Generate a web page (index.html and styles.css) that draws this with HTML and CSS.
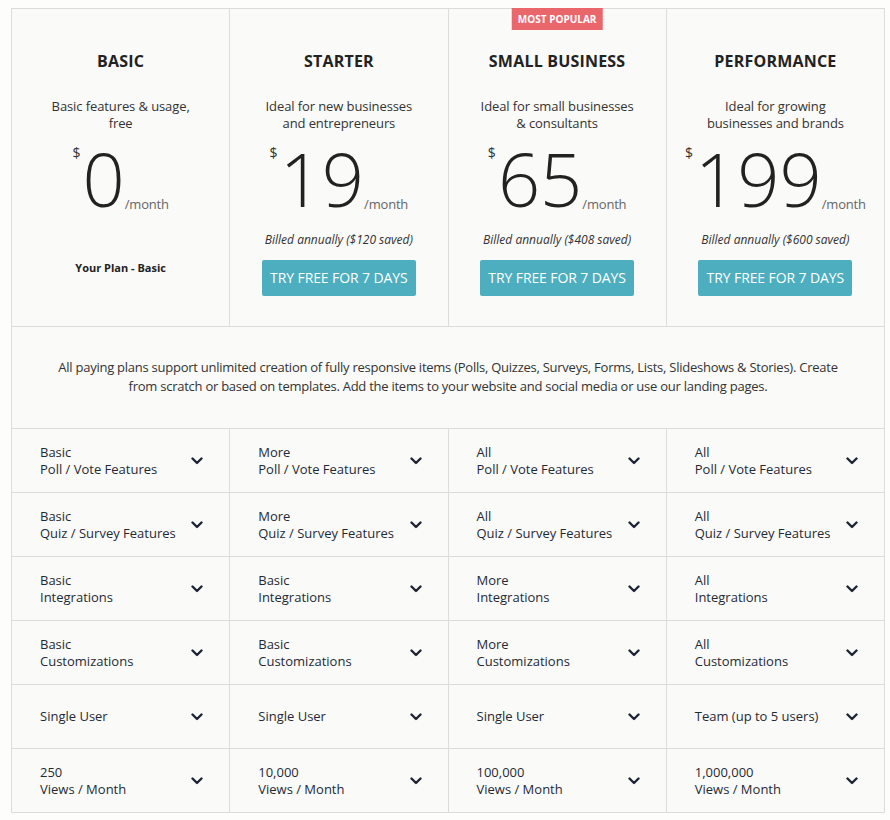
FILE: index.html
```html
<!DOCTYPE html>
<html lang="en">
<head>
<meta charset="utf-8">
<title>Pricing</title>
<link rel="stylesheet" href="styles.css">
</head>
<body>
<div class="pricing">
  <div class="plan">
    <h2 class="plan-title">BASIC</h2>
    <p class="plan-desc">Basic features &amp; usage,<br>free</p>
    <div class="price"><span class="cur">$</span><span class="amt">0</span><span class="per">/month</span></div>
    <div class="current">Your Plan - Basic</div>
  </div>
  <div class="plan">
    <h2 class="plan-title">STARTER</h2>
    <p class="plan-desc">Ideal for new businesses<br>and entrepreneurs</p>
    <div class="price"><span class="cur">$</span><span class="amt">19</span><span class="per">/month</span></div>
    <div class="billed">Billed annually ($120 saved)</div>
    <a class="btn">TRY FREE FOR 7 DAYS</a>
  </div>
  <div class="plan popular">
    <span class="badge">MOST POPULAR</span>
    <h2 class="plan-title">SMALL BUSINESS</h2>
    <p class="plan-desc">Ideal for small businesses<br>&amp; consultants</p>
    <div class="price"><span class="cur">$</span><span class="amt">65</span><span class="per">/month</span></div>
    <div class="billed">Billed annually ($408 saved)</div>
    <a class="btn">TRY FREE FOR 7 DAYS</a>
  </div>
  <div class="plan">
    <h2 class="plan-title">PERFORMANCE</h2>
    <p class="plan-desc">Ideal for growing<br>businesses and brands</p>
    <div class="price"><span class="cur">$</span><span class="amt">199</span><span class="per">/month</span></div>
    <div class="billed">Billed annually ($600 saved)</div>
    <a class="btn">TRY FREE FOR 7 DAYS</a>
  </div>

  <div class="note">All paying plans support unlimited creation of fully responsive items (Polls, Quizzes, Surveys, Forms, Lists, Slideshows &amp; Stories). Create from scratch or based on templates. Add the items to your website and social media or use our landing pages.</div>

  <div class="feat"><span>Basic<br>Poll / Vote Features</span><svg class="chev" viewBox="0 0 12 8"><path d="M1.5 1.5 6 6l4.5-4.5"/></svg></div>
  <div class="feat"><span>More<br>Poll / Vote Features</span><svg class="chev" viewBox="0 0 12 8"><path d="M1.5 1.5 6 6l4.5-4.5"/></svg></div>
  <div class="feat"><span>All<br>Poll / Vote Features</span><svg class="chev" viewBox="0 0 12 8"><path d="M1.5 1.5 6 6l4.5-4.5"/></svg></div>
  <div class="feat"><span>All<br>Poll / Vote Features</span><svg class="chev" viewBox="0 0 12 8"><path d="M1.5 1.5 6 6l4.5-4.5"/></svg></div>

  <div class="feat"><span>Basic<br>Quiz / Survey Features</span><svg class="chev" viewBox="0 0 12 8"><path d="M1.5 1.5 6 6l4.5-4.5"/></svg></div>
  <div class="feat"><span>More<br>Quiz / Survey Features</span><svg class="chev" viewBox="0 0 12 8"><path d="M1.5 1.5 6 6l4.5-4.5"/></svg></div>
  <div class="feat"><span>All<br>Quiz / Survey Features</span><svg class="chev" viewBox="0 0 12 8"><path d="M1.5 1.5 6 6l4.5-4.5"/></svg></div>
  <div class="feat"><span>All<br>Quiz / Survey Features</span><svg class="chev" viewBox="0 0 12 8"><path d="M1.5 1.5 6 6l4.5-4.5"/></svg></div>

  <div class="feat"><span>Basic<br>Integrations</span><svg class="chev" viewBox="0 0 12 8"><path d="M1.5 1.5 6 6l4.5-4.5"/></svg></div>
  <div class="feat"><span>Basic<br>Integrations</span><svg class="chev" viewBox="0 0 12 8"><path d="M1.5 1.5 6 6l4.5-4.5"/></svg></div>
  <div class="feat"><span>More<br>Integrations</span><svg class="chev" viewBox="0 0 12 8"><path d="M1.5 1.5 6 6l4.5-4.5"/></svg></div>
  <div class="feat"><span>All<br>Integrations</span><svg class="chev" viewBox="0 0 12 8"><path d="M1.5 1.5 6 6l4.5-4.5"/></svg></div>

  <div class="feat"><span>Basic<br>Customizations</span><svg class="chev" viewBox="0 0 12 8"><path d="M1.5 1.5 6 6l4.5-4.5"/></svg></div>
  <div class="feat"><span>Basic<br>Customizations</span><svg class="chev" viewBox="0 0 12 8"><path d="M1.5 1.5 6 6l4.5-4.5"/></svg></div>
  <div class="feat"><span>More<br>Customizations</span><svg class="chev" viewBox="0 0 12 8"><path d="M1.5 1.5 6 6l4.5-4.5"/></svg></div>
  <div class="feat"><span>All<br>Customizations</span><svg class="chev" viewBox="0 0 12 8"><path d="M1.5 1.5 6 6l4.5-4.5"/></svg></div>

  <div class="feat"><span>Single User</span><svg class="chev" viewBox="0 0 12 8"><path d="M1.5 1.5 6 6l4.5-4.5"/></svg></div>
  <div class="feat"><span>Single User</span><svg class="chev" viewBox="0 0 12 8"><path d="M1.5 1.5 6 6l4.5-4.5"/></svg></div>
  <div class="feat"><span>Single User</span><svg class="chev" viewBox="0 0 12 8"><path d="M1.5 1.5 6 6l4.5-4.5"/></svg></div>
  <div class="feat"><span>Team (up to 5 users)</span><svg class="chev" viewBox="0 0 12 8"><path d="M1.5 1.5 6 6l4.5-4.5"/></svg></div>

  <div class="feat"><span>250<br>Views / Month</span><svg class="chev" viewBox="0 0 12 8"><path d="M1.5 1.5 6 6l4.5-4.5"/></svg></div>
  <div class="feat"><span>10,000<br>Views / Month</span><svg class="chev" viewBox="0 0 12 8"><path d="M1.5 1.5 6 6l4.5-4.5"/></svg></div>
  <div class="feat"><span>100,000<br>Views / Month</span><svg class="chev" viewBox="0 0 12 8"><path d="M1.5 1.5 6 6l4.5-4.5"/></svg></div>
  <div class="feat"><span>1,000,000<br>Views / Month</span><svg class="chev" viewBox="0 0 12 8"><path d="M1.5 1.5 6 6l4.5-4.5"/></svg></div>
</div>
</body>
</html>
```

FILE: styles.css
```css
* { box-sizing: border-box; }

body {
  margin: 0;
  background: #fdfdfc;
  font-family: "Open Sans", "Liberation Sans", sans-serif;
  color: #222;
}

.pricing {
  margin: 8px 6px 0 11px;
  width: 874px;
  display: grid;
  grid-template-columns: repeat(4, 1fr);
  border-top: 1px solid #dcdcdc;
  border-left: 1px solid #dcdcdc;
  background: #fafaf8;
}

.plan {
  position: relative;
  border-right: 1px solid #dcdcdc;
  border-bottom: 1px solid #dcdcdc;
  padding: 41px 0 30px;
  text-align: center;
  display: flex;
  flex-direction: column;
  align-items: center;
  height: 318px;
}

.badge {
  position: absolute;
  top: -1px;
  left: 50%;
  transform: translateX(-50%);
  background: #e9676b;
  color: #fff;
  font-size: 10px;
  font-weight: 700;
  line-height: 22px;
  padding: 0 6px;
  white-space: nowrap;
}

.plan-title {
  margin: 0;
  font-size: 16px;
  font-weight: 700;
  line-height: 22px;
  letter-spacing: 0.2px;
  color: #222;
}

.plan-desc {
  margin: 26px 0 0;
  font-size: 13px;
  line-height: 17px;
  letter-spacing: -0.1px;
  color: #333;
}

.price {
  margin-top: 10px;
  line-height: 74px;
  height: 74px;
  white-space: nowrap;
}

.cur {
  font-size: 14px;
  line-height: 14px;
  vertical-align: top;
  color: #333;
  position: relative;
  top: 4px;
  margin-right: 2px;
}

.amt {
  font-size: 74px;
  font-weight: 300;
  color: #222;
}

.per {
  font-size: 13px;
  color: #666;
  letter-spacing: -0.2px;
  position: relative;
  top: 2px;
}

.billed {
  margin-top: 15px;
  font-size: 12px;
  line-height: 17px;
  font-style: italic;
  color: #333;
}

.current {
  margin-top: 44px;
  font-size: 11px;
  line-height: 16px;
  font-weight: 700;
  color: #222;
}

.btn {
  margin-top: 12px;
  display: block;
  width: 154px;
  height: 36px;
  line-height: 36px;
  background: #4caebe;
  color: #fff;
  font-size: 14px;
  letter-spacing: -0.1px;
  border-radius: 2px;
  text-align: center;
}

.note {
  grid-column: 1 / -1;
  border-right: 1px solid #dcdcdc;
  border-bottom: 1px solid #dcdcdc;
  padding: 31px 34px 0;
  height: 102px;
  text-align: center;
  font-size: 13px;
  line-height: 19px;
  letter-spacing: -0.25px;
  color: #333;
}

.feat {
  border-right: 1px solid #dcdcdc;
  border-bottom: 1px solid #dcdcdc;
  height: 64px;
  display: flex;
  align-items: center;
  justify-content: space-between;
  padding: 0 26px 0 28px;
  font-size: 13px;
  line-height: 17px;
  color: #1f2a36;
}

.chev {
  width: 12px;
  height: 8px;
  flex: none;
  fill: none;
  stroke: #1c2633;
  stroke-width: 2.4;
  stroke-linecap: round;
  stroke-linejoin: round;
}
```
